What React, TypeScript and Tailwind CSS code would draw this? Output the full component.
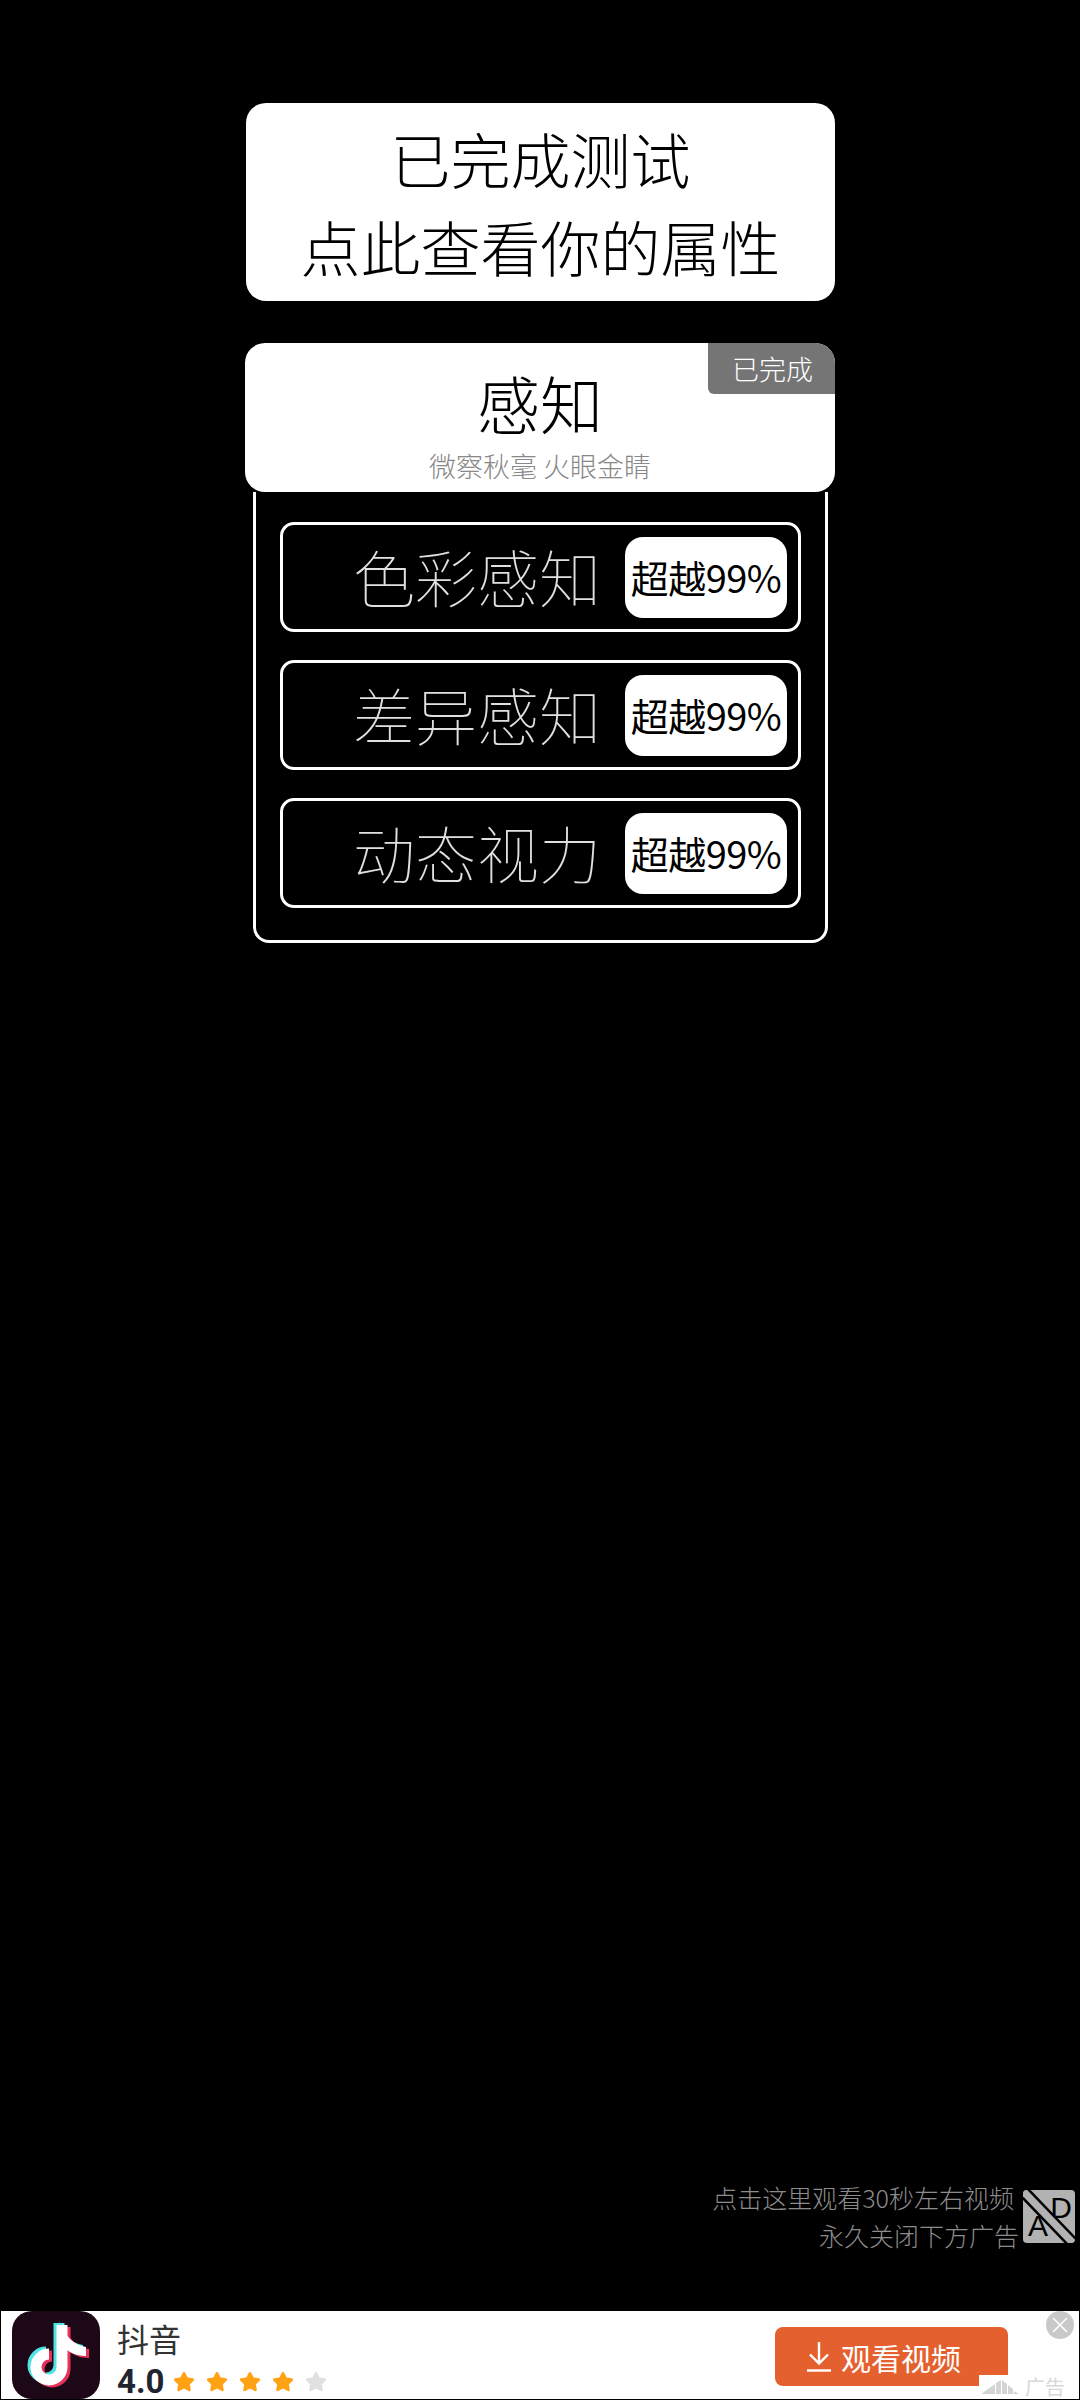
import { Star, X } from 'lucide-react';

const rows = ['色彩感知', '差异感知', '动态视力'];
const stars = [true, true, true, true, false];

const cjk = "font-['Noto_Sans_CJK_SC','Noto_Sans',sans-serif]";

function AppIcon() {
  const note = 'M50 14V56a13 13 0 1 1-13-13';
  const flag = 'M50 12C52 25 62 34 74 36V45C64 45 56 41 50 35Z';
  return (
    <svg viewBox="0 0 88 88" className="w-[88px] h-[88px] shrink-0">
      <rect width="88" height="88" rx="20" fill="#1c0816" />
      <g transform="translate(-3 -2)">
        <path d={note} fill="none" stroke="#4fe3e6" strokeWidth="11" />
        <path d={flag} fill="#4fe3e6" />
      </g>
      <g transform="translate(3 2)">
        <path d={note} fill="none" stroke="#e8305a" strokeWidth="11" />
        <path d={flag} fill="#e8305a" />
      </g>
      <path d={note} fill="none" stroke="#fff" strokeWidth="11" />
      <path d={flag} fill="#fff" />
    </svg>
  );
}

function NoAdIcon() {
  return (
    <div className="relative mt-[12px] w-[52px] h-[53px] rounded-[4px] bg-[#b2b2b2] overflow-hidden font-['Liberation_Sans',sans-serif] text-[30px] leading-none text-black">
      <span className="absolute left-[5px] bottom-[2px]">A</span>
      <span className="absolute right-[3px] top-[3px]">D</span>
      <svg viewBox="0 0 52 53" className="absolute inset-0 w-full h-full">
        <path d="M0 1L50 53" stroke="#b2b2b2" strokeWidth="8" />
        <path d="M3-3L53 49" stroke="#000" strokeWidth="2.5" />
        <path d="M-3 5L47 57" stroke="#000" strokeWidth="2.5" />
      </svg>
    </div>
  );
}

function DownloadArrow() {
  return (
    <svg viewBox="0 0 24 30" className="w-[24px] h-[30px] shrink-0" fill="none" stroke="#fff" strokeWidth="2.4">
      <path d="M12 0V21" />
      <path d="M3 12.5L12 21.5L21 12.5" />
      <path d="M0 28.5H24" />
    </svg>
  );
}

function AdBar() {
  return (
    <div className="relative mx-[1px] mb-[1px] h-[88px] bg-white flex items-center pl-[11px] pr-[71px]">
      <AppIcon />
      <div className="ml-[17px] self-start mt-[8px] flex flex-col">
        <span className="text-[32px] leading-[38px] text-[#333]">抖音</span>
        <div className="flex items-center mt-[8px]">
          <span className="font-['Roboto',sans-serif] font-bold text-[33px] leading-[34px] text-[#1f2430]">4.0</span>
          <div className="ml-[9px] flex gap-[11px]">
            {stars.map((on, i) => (
              <Star key={i} className={on ? 'w-[22px] h-[22px] text-[#ffa214] fill-[#ffa214]' : 'w-[22px] h-[22px] text-[#e0e0e0] fill-[#e0e0e0]'} />
            ))}
          </div>
        </div>
      </div>
      <button className="ml-auto mt-[3px] w-[233px] h-[59px] rounded-[8px] bg-[#e5602f] text-white flex items-center pl-[32px] gap-[10px]">
        <DownloadArrow />
        <span className="text-[30px] leading-none">观看视频</span>
      </button>
      <div className="absolute right-[5px] top-0 w-[28px] h-[28px] rounded-full bg-[#c9c9c9] flex items-center justify-center">
        <X className="w-[26px] h-[26px] text-white" strokeWidth={1.5} />
      </div>
      <div className="absolute right-0 bottom-0 w-[100px] h-[24px] bg-white flex items-center gap-[6px] pl-[2px]">
        <svg viewBox="0 0 38 16" className="w-[38px] h-[16px]">
          <path d="M0 15L14 5V15ZM15 4L20 1V15H15ZM21 1L26 5V15H21ZM27 6L32 10V15H27ZM33 12L38 15H33Z" fill="#d4d4d4" />
        </svg>
        <span className="text-[20px] leading-[24px] text-[#d8d8d8]">广告</span>
      </div>
    </div>
  );
}

export default function App() {
  return (
    <div className={`h-[2400px] bg-black flex flex-col overflow-hidden ${cjk}`}>
      <div className="flex-1 flex flex-col items-center pl-[1px]">
        <div className="mt-[103px] w-[589px] h-[198px] rounded-[20px] bg-white flex flex-col items-center justify-center text-black text-[60px] font-light leading-[88px]">
          <div>已完成测试</div>
          <div>点此查看你的属性</div>
        </div>

        <div className="mt-[42px] mr-[1px] relative w-[590px] h-[149px] rounded-[20px] bg-white flex flex-col items-center">
          <div className="mt-[16px] text-[63px] leading-[86px] font-light text-black">感知</div>
          <div className="mt-[3px] text-[27px] leading-[36px] font-light text-[#888]">微察秋毫 火眼金睛</div>
          <div className="absolute right-0 top-0 w-[127px] h-[51px] rounded-tr-[20px] rounded-bl-[6px] bg-[#757575] text-white text-[27px] font-light leading-[51px] pl-[24px]">已完成</div>
        </div>

        <div className="w-[575px] border-[3px] border-t-0 border-white rounded-b-[16px] px-[24px] pt-[30px] pb-[32px] flex flex-col gap-[28px]">
          {rows.map((name) => (
            <div key={name} className="h-[110px] border-[3px] border-white rounded-[14px] flex items-center justify-end pr-[11px]">
              <span className="-mt-[3px] text-[62px] leading-none font-thin text-[#e0e0e0]">{name}</span>
              <div className="ml-[24px] w-[162px] h-[81px] rounded-[18px] bg-white flex items-center justify-center text-[38px] leading-none tracking-[-0.5px] text-black">超越99%</div>
            </div>
          ))}
        </div>
      </div>

      <div className="flex justify-end items-start gap-[4px] pr-[5px] mb-[57px]">
        <div className="flex flex-col items-end text-[25px] leading-[38px] font-light text-[#8c8c8c]">
          <div className="mr-[5px]">点击这里观看30秒左右视频</div>
          <div>永久关闭下方广告</div>
        </div>
        <NoAdIcon />
      </div>

      <AdBar />
    </div>
  );
}
